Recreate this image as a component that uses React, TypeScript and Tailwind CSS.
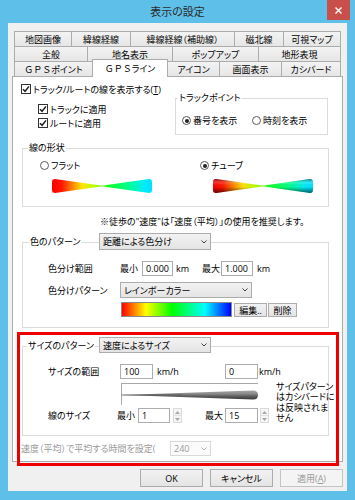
import React from "react";

type Kids = { className?: string; children?: React.ReactNode };

function Check({ label, className }: { label: React.ReactNode; className?: string }) {
  return (
    <div className={`flex items-center gap-[2px] h-[10px] ${className ?? ""}`}>
      <span className="w-[10px] h-[10px] border border-[#333] bg-white flex items-center justify-center shrink-0">
        <svg width="8" height="8" viewBox="0 0 8 8">
          <path d="M1 4.2 L3.1 6.3 L7 1.4" fill="none" stroke="#222" strokeWidth="1.5" />
        </svg>
      </span>
      <span className="leading-none whitespace-nowrap">{label}</span>
    </div>
  );
}

function Radio({ label, on, className }: { label: string; on?: boolean; className?: string }) {
  return (
    <div className={`flex items-center gap-[2px] h-[9px] ${className ?? ""}`}>
      <span className="w-[9px] h-[9px] rounded-full border border-[#5a5a5a] bg-white flex items-center justify-center shrink-0">
        {on && <span className="w-[4px] h-[4px] rounded-full bg-[#222]" />}
      </span>
      <span className="leading-none whitespace-nowrap">{label}</span>
    </div>
  );
}

function Chevron({ color = "#444" }: { color?: string }) {
  return (
    <svg width="6" height="4" viewBox="0 0 6 4" className="shrink-0">
      <path d="M0.5 0.5 L3 3 L5.5 0.5" fill="none" stroke={color} strokeWidth="1" />
    </svg>
  );
}

function Combo({ text, className, disabled }: { text: string; className?: string; disabled?: boolean }) {
  return (
    <div
      className={`flex items-center justify-between pl-[3px] pr-[3px] border ${
        disabled
          ? "border-[#d9d9d9] bg-[#fbfbfb] text-[#9a9a9a]"
          : "border-[#acacac] bg-[linear-gradient(#f2f2f2,#e4e4e4)]"
      } ${className ?? ""}`}
    >
      <span className="leading-none whitespace-nowrap">{text}</span>
      <Chevron color={disabled ? "#b0b0b0" : "#444"} />
    </div>
  );
}

function Field({ value, className }: { value: string; className?: string }) {
  return (
    <div className={`flex items-center border border-[#abadb3] bg-white pl-[3px] h-[15px] ${className ?? ""}`}>
      <span className="leading-none">{value}</span>
    </div>
  );
}

function Spin({ className }: { className?: string }) {
  return (
    <div className={`flex flex-col w-[9px] h-[15px] border border-[#dadada] bg-[#f6f6f6] ${className ?? ""}`}>
      <div className="flex-1 flex items-center justify-center border-b border-[#e2e2e2]">
        <svg width="5" height="3" viewBox="0 0 5 3">
          <path d="M0 3 L2.5 0 L5 3Z" fill="#a8a8a8" />
        </svg>
      </div>
      <div className="flex-1 flex items-center justify-center">
        <svg width="5" height="3" viewBox="0 0 5 3">
          <path d="M0 0 L2.5 3 L5 0Z" fill="#a8a8a8" />
        </svg>
      </div>
    </div>
  );
}

function Btn({ className, children }: Kids) {
  return (
    <div
      className={`flex items-center justify-center border border-[#acacac] bg-[linear-gradient(#f2f2f2,#e4e4e4)] leading-none ${className ?? ""}`}
    >
      {children}
    </div>
  );
}

function Group({ className, children }: Kids) {
  return <div className={`relative border border-[#dcdcdc] ${className ?? ""}`}>{children}</div>;
}

function Legend({ className, children }: Kids) {
  return (
    <span className={`absolute -top-[6px] bg-white px-[1px] leading-none whitespace-nowrap ${className ?? ""}`}>
      {children}
    </span>
  );
}

const BOW = "M3 0 L49 6.4 L51 6.4 L97 0 Q100 0 100 3 L100 11 Q100 14 97 14 L51 7.6 L49 7.6 L3 14 Q0 14 0 11 L0 3 Q0 0 3 0Z";

function RainbowStops() {
  return (
    <>
      <stop offset="0" stopColor="#ff0000" />
      <stop offset="0.1" stopColor="#ff1800" />
      <stop offset="0.3" stopColor="#ffe400" />
      <stop offset="0.43" stopColor="#b4ff00" />
      <stop offset="0.56" stopColor="#10ff20" />
      <stop offset="0.76" stopColor="#00ff8c" />
      <stop offset="0.93" stopColor="#00ebff" />
      <stop offset="1" stopColor="#00e0ff" />
    </>
  );
}

function FlatBar({ className }: { className?: string }) {
  return (
    <svg width="100" height="14" viewBox="0 0 100 14" className={`block ${className ?? ""}`}>
      <defs>
        <linearGradient id="flatRb" x1="0" x2="1" y1="0" y2="0">
          <RainbowStops />
        </linearGradient>
      </defs>
      <path d={BOW} fill="url(#flatRb)" />
    </svg>
  );
}

function TubeBar({ className }: { className?: string }) {
  return (
    <svg width="100" height="14" viewBox="0 0 100 14" className={`block ${className ?? ""}`}>
      <defs>
        <linearGradient id="tubeRb" x1="0" x2="1" y1="0" y2="0">
          <RainbowStops />
        </linearGradient>
        <linearGradient id="tubeShade" x1="0" x2="0" y1="0" y2="14" gradientUnits="userSpaceOnUse">
          <stop offset="0" stopColor="#000" stopOpacity="0.5" />
          <stop offset="0.3" stopColor="#fff" stopOpacity="0.15" />
          <stop offset="0.55" stopColor="#000" stopOpacity="0" />
          <stop offset="1" stopColor="#000" stopOpacity="0.6" />
        </linearGradient>
      </defs>
      <path d={BOW} fill="url(#tubeRb)" />
      <path d={BOW} fill="url(#tubeShade)" />
    </svg>
  );
}

function Taper() {
  return (
    <svg width="137" height="10" viewBox="0 0 137 10" className="block">
      <defs>
        <linearGradient id="taperG" x1="0" x2="0" y1="0" y2="1">
          <stop offset="0" stopColor="#a4a4a4" />
          <stop offset="0.35" stopColor="#8c8c8c" />
          <stop offset="0.65" stopColor="#5c5c5c" />
          <stop offset="1" stopColor="#383838" />
        </linearGradient>
      </defs>
      <path d="M0 5 L131 0.5 Q136 0.5 136 5 Q136 9.5 131 9.5 Z" fill="url(#taperG)" />
      <path d="M0 5 L60 5" stroke="#555" strokeWidth="0.8" />
    </svg>
  );
}

function TabRow({ children }: Kids) {
  return <div className="flex h-[15px] items-start">{children}</div>;
}

function Tab({ className, children, active }: Kids & { active?: boolean }) {
  return (
    <div
      className={`flex items-center justify-center border border-b-0 border-[#acacac] leading-none whitespace-nowrap -ml-px first:ml-0 ${
        active ? "relative z-10 bg-white h-[18px] -mt-[2px]" : "h-[15px] bg-[linear-gradient(#f3f3f3,#e6e6e6)]"
      } ${className ?? ""}`}
    >
      {children}
    </div>
  );
}

// full-width latin letters keep their full width (no proportional kerning)
function Gps() {
  return <span className="[font-feature-settings:normal]">ＧＰＳ</span>;
}

export default function App() {
  return (
    <div className="relative w-[355px] h-[500px] overflow-hidden bg-[#5ec0e8] flex flex-col text-[9px] text-black [font-family:'Open_Sans','Noto_Sans_CJK_JP',sans-serif] [font-feature-settings:'palt']">
      {/* Title bar */}
      <div className="relative h-[23px] flex items-center justify-center">
        <span className="text-[11px] text-[#2a2a2a] leading-none">表示の設定</span>
        <div className="absolute right-[5px] top-0 w-[23px] h-[20px] bg-[#c9504a] flex items-center justify-center">
          <svg width="7" height="7" viewBox="0 0 7 7">
            <path d="M0.5 0.5 L6.5 6.5 M6.5 0.5 L0.5 6.5" stroke="#fff" strokeWidth="1.4" />
          </svg>
        </div>
      </div>

      {/* Client area */}
      <div className="mx-[8px] mb-[9px] flex-1 bg-[#f0f0f0] flex flex-col px-[4px] pt-[8px]">
        {/* Tabs */}
        <div className="ml-[2px] w-[327px] flex flex-col">
          <TabRow>
            <Tab className="w-[58px]">地図画像</Tab>
            <Tab className="w-[60px]">緯線経線</Tab>
            <Tab className="w-[105px]">緯線経線（補助線）</Tab>
            <Tab className="w-[50px]">磁北線</Tab>
            <Tab className="w-[58px]">可視マップ</Tab>
          </TabRow>
          <TabRow>
            <Tab className="w-[74px]">全般</Tab>
            <Tab className="w-[86px]">地名表示</Tab>
            <Tab className="w-[87px]">ポップアップ</Tab>
            <Tab className="w-[83px]">地形表現</Tab>
          </TabRow>
          <TabRow>
            <Tab className="w-[79px]">
              <Gps />
              ポイント
            </Tab>
            <Tab active className="w-[76px]">
              <Gps />
              ライン
            </Tab>
            <Tab className="w-[53px]">アイコン</Tab>
            <Tab className="w-[63px]">画面表示</Tab>
            <Tab className="w-[60px]">カシバード</Tab>
          </TabRow>
        </div>

        {/* Tab page */}
        <div className="relative h-[386px] border border-[#acacac] bg-white flex flex-col">
          <Check
            className="mt-[7px] ml-[8px]"
            label={
              <>
                トラック/ルートの線を表示する(<span className="underline">T</span>)
              </>
            }
          />

          <div className="flex mt-[4px]">
            <div className="ml-[25px] pt-[6px] flex flex-col gap-[4px]">
              <Check label="トラックに適用" />
              <Check label="ルートに適用" />
            </div>
            <Group className="ml-auto mr-[14px] w-[153px] h-[37px]">
              <Legend className="left-[2px]">トラックポイント</Legend>
              <div className="flex pt-[17px] pl-[6px]">
                <Radio on label="番号を表示" className="w-[70px]" />
                <Radio label="時刻を表示" />
              </div>
            </Group>
          </div>

          {/* Line shape */}
          <Group className="mt-[13px] ml-[9px] w-[307px] h-[59px] flex">
            <Legend className="left-[5px]">線の形状</Legend>
            <div className="w-[160px] pl-[17px] pt-[12px]">
              <Radio label="フラット" />
              <FlatBar className="mt-[9px] ml-[12px]" />
            </div>
            <div className="pl-[17px] pt-[12px]">
              <Radio on label="チューブ" />
              <TubeBar className="mt-[9px] ml-[13px]" />
            </div>
          </Group>

          <div className="mt-[10px] ml-[87px] leading-[10px] whitespace-nowrap">
            {"※徒歩の\"速度\"は「速度（平均）」の使用を推奨します。"}
          </div>

          {/* Colour pattern */}
          <Group className="mt-[15px] ml-[9px] w-[307px] h-[86px] pl-[25px] pt-[18px]">
            <Legend className="left-[6px]">色のパターン</Legend>
            <Combo className="absolute left-[76px] -top-[10px] w-[112px] h-[17px]" text="距離による色分け" />
            <div className="flex items-center h-[15px]">
              <span className="w-[72px] leading-none">色分け範囲</span>
              <span className="w-[22px] leading-none">最小</span>
              <Field className="w-[31px]" value="0.000" />
              <span className="ml-[3px] w-[26px] leading-none">km</span>
              <span className="w-[19px] leading-none">最大</span>
              <Field className="w-[32px]" value="1.000" />
              <span className="ml-[4px] leading-none">km</span>
            </div>
            <div className="flex items-center mt-[6px] h-[16px]">
              <span className="w-[72px] leading-none">色分けパターン</span>
              <Combo className="w-[132px] h-[16px]" text="レインボーカラー" />
            </div>
            <div className="flex items-start mt-[4px] ml-[73px]">
              <div className="w-[111px] h-[15px] border border-[#8a8a8a] bg-[linear-gradient(to_right,#ff0000,#ffff00_22%,#00ff00_46%,#00ffff_76%,#0000ff)]" />
              <Btn className="ml-[2px] mt-[1px] w-[33px] h-[14px]">編集..</Btn>
              <Btn className="ml-[1px] mt-[1px] w-[29px] h-[14px]">削除</Btn>
            </div>
          </Group>

          {/* Size pattern */}
          <Group className="mt-[18px] ml-[9px] w-[307px] h-[90px] pl-[25px] pt-[17px]">
            <Legend className="left-[4px]">サイズのパターン</Legend>
            <Combo className="absolute left-[76px] -top-[10px] w-[112px] h-[16px]" text="速度によるサイズ" />
            <div className="flex items-center h-[15px]">
              <span className="w-[72px] leading-none">サイズの範囲</span>
              <Field className="w-[33px]" value="100" />
              <span className="ml-[4px] w-[68px] leading-none">km/h</span>
              <Field className="w-[33px]" value="0" />
              <span className="ml-[1px] leading-none">km/h</span>
            </div>
            <div className="flex mt-[4px]">
              <div className="w-[221px]">
                <div className="ml-[73px] w-[137px] h-[22px] border-t border-l border-[#a8a8a8] pt-[6px]">
                  <Taper />
                </div>
                <div className="flex items-center mt-[3px] h-[15px]">
                  <span className="w-[69px] leading-none">線のサイズ</span>
                  <span className="w-[21px] leading-none">最小</span>
                  <Field className="w-[32px]" value="1" />
                  <Spin className="ml-[3px]" />
                  <span className="ml-[23px] w-[20px] leading-none">最大</span>
                  <Field className="w-[33px]" value="15" />
                  <Spin className="ml-[2px]" />
                </div>
              </div>
              <div className="ml-[7px] -mt-[1px] flex flex-col">
                <span className="h-[10.3px] leading-[10.3px] whitespace-nowrap">サイズパターン</span>
                <span className="h-[10.3px] leading-[10.3px] whitespace-nowrap">はカシバードに</span>
                <span className="h-[10.3px] leading-[10.3px] whitespace-nowrap">は反映されま</span>
                <span className="h-[10.3px] leading-[10.3px] whitespace-nowrap">せん</span>
              </div>
            </div>
          </Group>

          <div className="flex items-center ml-[8px] mt-[5px] h-[15px] text-[#9a9a9a]">
            <span className="w-[149px] leading-none whitespace-nowrap">速度（平均）で平均する時間を設定(</span>
            <Combo disabled className="w-[41px] h-[15px]" text="240" />
          </div>
        </div>

        {/* Dialog buttons */}
        <div className="flex justify-end gap-[7px] mt-[7px]">
          <Btn className="w-[63px] h-[18px] border-[#6fa8dc]">OK</Btn>
          <Btn className="w-[63px] h-[18px]">キャンセル</Btn>
          <div className="w-[63px] h-[18px] flex items-center justify-center border border-[#c4c4c4] bg-[#f4f4f4] text-[#9a9a9a] leading-none">
            適用(<span className="underline">A</span>)
          </div>
        </div>
      </div>

      {/* Red annotation frame */}
      <div className="absolute left-[17px] top-[332px] w-[322px] h-[134px] border-[3px] border-[#ee0000] pointer-events-none" />
    </div>
  );
}
